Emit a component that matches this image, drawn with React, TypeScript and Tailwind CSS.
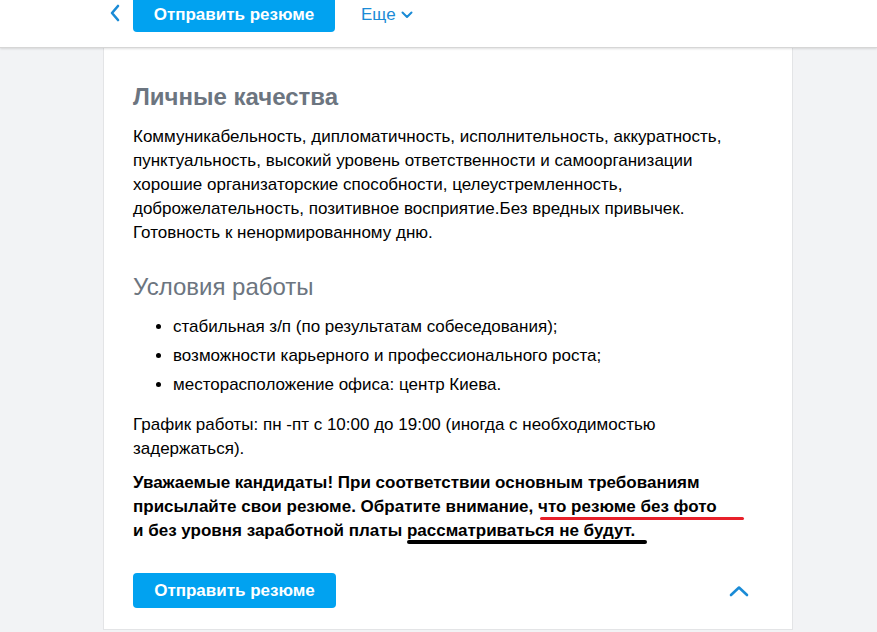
import React from "react";

export default function App() {
  return (
    <div className="min-h-[632px] bg-[#f2f3f5] font-['Liberation_Sans',Arial,sans-serif] text-black">
      {/* header */}
      <div className="h-[48px] bg-white border-b border-[#d6d6d6] shadow-[0_1px_2px_rgba(0,0,0,0.12)] relative z-10">
        <div className="flex items-center h-[32px] pl-[108px]">
          <svg width="14" height="18" viewBox="0 0 14 18" className="mt-[-6px]">
            <path d="M10 2 L4 9 L10 16" fill="none" stroke="#1a8bd6" strokeWidth="2.6" strokeLinecap="round" strokeLinejoin="round" />
          </svg>
          <button className="ml-[11px] mt-[-3px] h-[35px] w-[202px] rounded-[4px] bg-[#01a2f0] text-white font-bold text-[17px]">
            Отправить резюме
          </button>
          <span className="ml-[26px] mt-[-3px] text-[17px] text-[#1a8bd6] flex items-center gap-[5px]">
            Еще
            <svg width="12" height="8" viewBox="0 0 12 8">
              <path d="M1.5 1.5 L6 6 L10.5 1.5" fill="none" stroke="#1a8bd6" strokeWidth="2" strokeLinecap="round" strokeLinejoin="round" />
            </svg>
          </span>
        </div>
      </div>
      {/* card */}
      <div className="ml-[103px] w-[690px] bg-white border-x border-b border-[#e3e4e6] pl-[29px] pr-[40px] pt-[34px] pb-[21px]">
        <h2 className="text-[24px] font-bold text-[#6c7580] leading-[30px]">Личные качества</h2>
        <p className="mt-[13px] max-w-[597px] text-[17px] leading-[24px]">
          Коммуникабельность, дипломатичность, исполнительность, аккуратность, пунктуальность, высокий уровень ответственности и самоорганизации хорошие организаторские способности, целеустремленность, доброжелательность, позитивное восприятие.Без вредных привычек. Готовность к ненормированному дню.
        </p>
        <h2 className="mt-[27px] text-[24px] text-[#6c7580] leading-[30px]">Условия работы</h2>
        <ul className="mt-[15px] text-[17px] leading-[20px] pl-[40px] list-disc">
          <li className="mb-[9px]">стабильная з/п (по результатам собеседования);</li>
          <li className="mb-[9px]">возможности карьерного и профессионального роста;</li>
          <li>месторасположение офиса: центр Киева.</li>
        </ul>
        <p className="mt-[18px] max-w-[597px] text-[17px] leading-[24px]">
          График работы: пн -пт с 10:00 до 19:00 (иногда с необходимостью задержаться).
        </p>
        <p className="mt-[10px] max-w-[597px] text-[17px] leading-[24px] font-bold">
          Уважаемые кандидаты! При соответствии основным требованиям присылайте свои резюме. Обратите внимание,{" "}
          <span className="relative">
            что резюме без фото
            <span className="absolute left-[2px] right-[-27px] bottom-[-4px] h-[3px] rounded-full bg-[#e8202a]" />
          </span>{" "}
          и без уровня заработной платы{" "}
          <span className="relative">
            рассматриваться не будут.
            <span className="absolute left-0 right-[-12px] bottom-[-4px] h-[4px] rounded-full bg-black" />
          </span>
        </p>
        <div className="mt-[30px] flex items-center justify-between">
          <button className="h-[35px] w-[203px] rounded-[4px] bg-[#01a2f0] text-white font-bold text-[17px]">
            Отправить резюме
          </button>
          <svg width="20" height="12" viewBox="0 0 20 12" className="mr-[3px]">
            <path d="M2 10 L10 2.5 L18 10" fill="none" stroke="#1a8bd6" strokeWidth="2.6" strokeLinecap="round" strokeLinejoin="round" />
          </svg>
        </div>
      </div>
    </div>
  );
}
